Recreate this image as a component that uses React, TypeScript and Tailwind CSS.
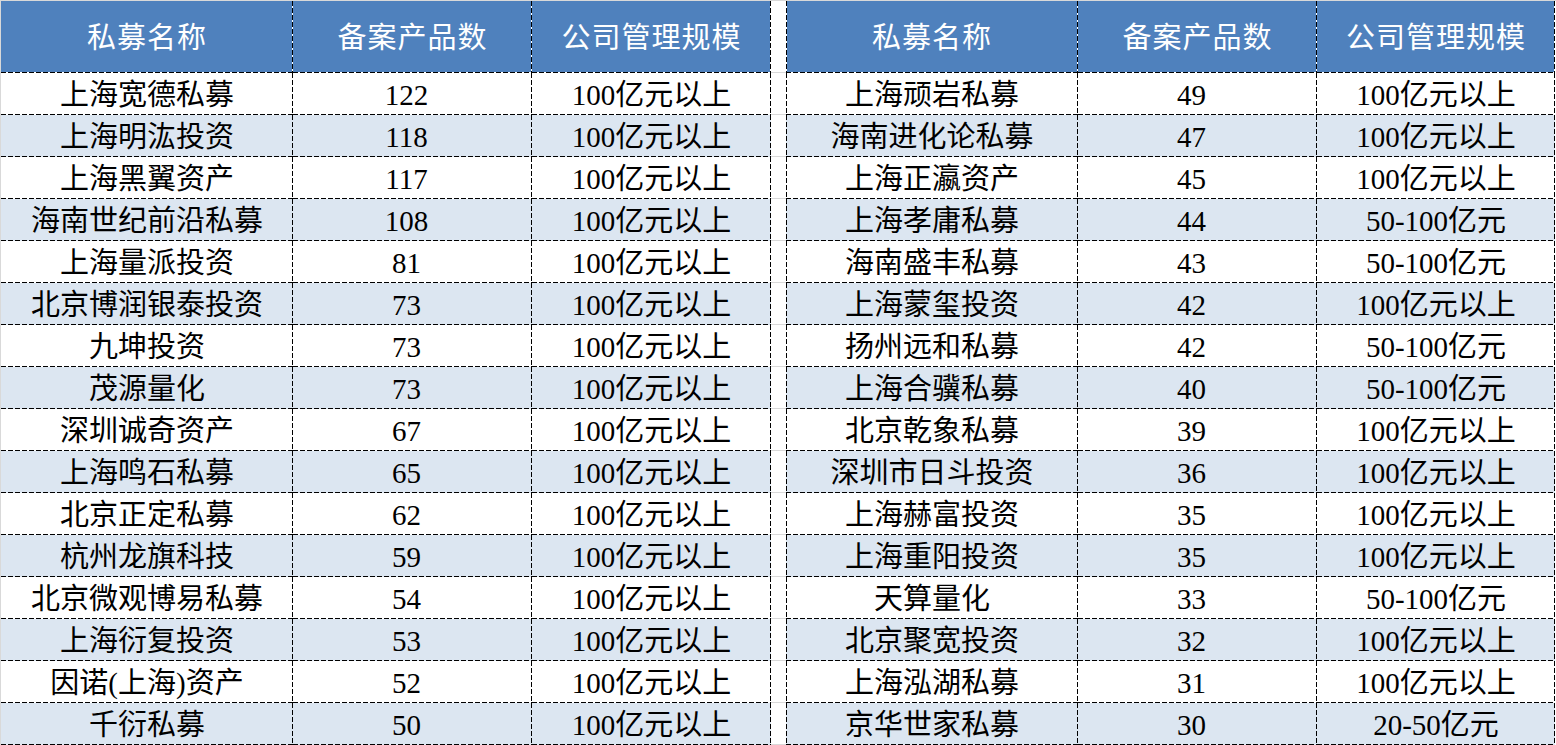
const leftRows: [string, string, string][] = [
  ["上海宽德私募", "122", "100亿元以上"],
  ["上海明汯投资", "118", "100亿元以上"],
  ["上海黑翼资产", "117", "100亿元以上"],
  ["海南世纪前沿私募", "108", "100亿元以上"],
  ["上海量派投资", "81", "100亿元以上"],
  ["北京博润银泰投资", "73", "100亿元以上"],
  ["九坤投资", "73", "100亿元以上"],
  ["茂源量化", "73", "100亿元以上"],
  ["深圳诚奇资产", "67", "100亿元以上"],
  ["上海鸣石私募", "65", "100亿元以上"],
  ["北京正定私募", "62", "100亿元以上"],
  ["杭州龙旗科技", "59", "100亿元以上"],
  ["北京微观博易私募", "54", "100亿元以上"],
  ["上海衍复投资", "53", "100亿元以上"],
  ["因诺(上海)资产", "52", "100亿元以上"],
  ["千衍私募", "50", "100亿元以上"],
];

const rightRows: [string, string, string][] = [
  ["上海顽岩私募", "49", "100亿元以上"],
  ["海南进化论私募", "47", "100亿元以上"],
  ["上海正瀛资产", "45", "100亿元以上"],
  ["上海孝庸私募", "44", "50-100亿元"],
  ["海南盛丰私募", "43", "50-100亿元"],
  ["上海蒙玺投资", "42", "100亿元以上"],
  ["扬州远和私募", "42", "50-100亿元"],
  ["上海合骥私募", "40", "50-100亿元"],
  ["北京乾象私募", "39", "100亿元以上"],
  ["深圳市日斗投资", "36", "100亿元以上"],
  ["上海赫富投资", "35", "100亿元以上"],
  ["上海重阳投资", "35", "100亿元以上"],
  ["天算量化", "33", "50-100亿元"],
  ["北京聚宽投资", "32", "100亿元以上"],
  ["上海泓湖私募", "31", "100亿元以上"],
  ["京华世家私募", "30", "20-50亿元"],
];

const headers = ["私募名称", "备案产品数", "公司管理规模"];

// dashed grid lines drawn as repeating gradients (5px dash, 2px gap) like the Excel export
const base = "flex items-center justify-center whitespace-nowrap pt-[3px]";
const headBg =
  "[background:linear-gradient(to_right,#000_5px,transparent_5px)_left_bottom/7px_1px_repeat-x,linear-gradient(to_bottom,#000_5px,transparent_5px)_right_top/1px_7px_repeat-y,linear-gradient(#fff,#fff)_left_bottom/100%_1px_no-repeat,linear-gradient(#fff,#fff)_right_top/1px_100%_no-repeat,#4f81bd]";
const headBgL =
  "[background:linear-gradient(to_right,#000_5px,transparent_5px)_left_bottom/7px_1px_repeat-x,linear-gradient(to_bottom,#000_5px,transparent_5px)_right_top/1px_7px_repeat-y,linear-gradient(to_bottom,#000_5px,transparent_5px)_left_top/1px_7px_repeat-y,linear-gradient(#fff,#fff)_left_bottom/100%_1px_no-repeat,linear-gradient(#fff,#fff)_right_top/1px_100%_no-repeat,linear-gradient(#fff,#fff)_left_top/1px_100%_no-repeat,#4f81bd]";
const whiteBg =
  "[background:linear-gradient(to_right,#000_5px,transparent_5px)_left_bottom/7px_1px_repeat-x,linear-gradient(to_bottom,#000_5px,transparent_5px)_right_top/1px_7px_repeat-y,#fff]";
const whiteBgL =
  "[background:linear-gradient(to_right,#000_5px,transparent_5px)_left_bottom/7px_1px_repeat-x,linear-gradient(to_bottom,#000_5px,transparent_5px)_right_top/1px_7px_repeat-y,linear-gradient(to_bottom,#000_5px,transparent_5px)_left_top/1px_7px_repeat-y,#fff]";
const blueBg =
  "[background:linear-gradient(to_right,#000_5px,transparent_5px)_left_bottom/7px_1px_repeat-x,linear-gradient(to_bottom,#000_5px,transparent_5px)_right_top/1px_7px_repeat-y,#dce6f1]";
const blueBgL =
  "[background:linear-gradient(to_right,#000_5px,transparent_5px)_left_bottom/7px_1px_repeat-x,linear-gradient(to_bottom,#000_5px,transparent_5px)_right_top/1px_7px_repeat-y,linear-gradient(to_bottom,#000_5px,transparent_5px)_left_top/1px_7px_repeat-y,#dce6f1]";

const App = () => {
  return (
    <div className="w-[1556px] h-[745px] bg-white border-l border-t border-[#d9d9d9] text-[29px] leading-none text-black font-['Liberation_Serif','Noto_Sans_CJK_SC',serif]">
      {/* header */}
      <div className="flex h-[72px] text-white tracking-[1px]">
        <div className={`${base} w-[292px] ${headBg}`}>{headers[0]}</div>
        <div className={`${base} w-[239px] ${headBg}`}>{headers[1]}</div>
        <div className={`${base} w-[239px] ${headBg}`}>{headers[2]}</div>
        <div className="w-[15px] border-b border-[#d9d9d9]" />
        <div className={`${base} w-[292px] ${headBgL}`}>{headers[0]}</div>
        <div className={`${base} w-[239px] ${headBg}`}>{headers[1]}</div>
        <div className={`${base} w-[238px] ${headBg}`}>{headers[2]}</div>
      </div>

      {leftRows.map((l, i) => {
        const r = rightRows[i];
        const odd = i % 2 === 1;
        const bg = odd ? blueBg : whiteBg;
        const bgL = odd ? blueBgL : whiteBgL;
        return (
          <div key={i} className="flex h-[42px]">
            <div className={`${base} w-[292px] ${bg}`}>{l[0]}</div>
            <div className={`${base} w-[239px] pr-[12px] ${bg}`}>{l[1]}</div>
            <div className={`${base} w-[239px] ${bg}`}>{l[2]}</div>
            <div className="w-[15px] border-b border-[#d9d9d9]" />
            <div className={`${base} w-[292px] ${bgL}`}>{r[0]}</div>
            <div className={`${base} w-[239px] pr-[12px] ${bg}`}>{r[1]}</div>
            <div className={`${base} w-[238px] ${bg}`}>{r[2]}</div>
          </div>
        );
      })}
    </div>
  );
};

export default App;
